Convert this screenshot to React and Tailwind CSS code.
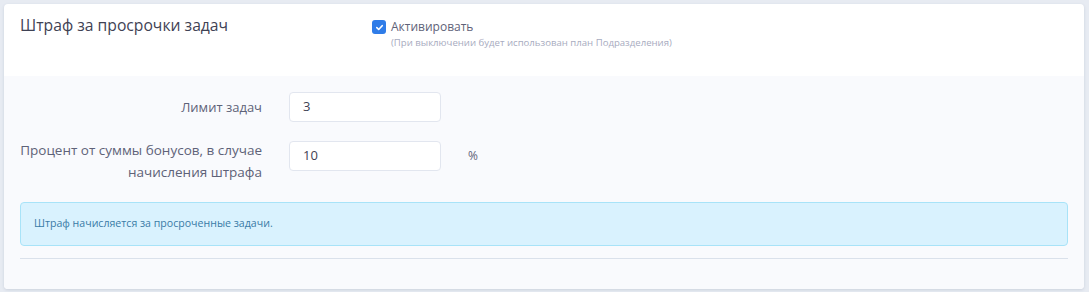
export default function App() {
  return (
    <div className="h-[292px] w-[1089px] bg-[#e7ebf2] p-1" style={{ fontFamily: '"Open Sans", "Noto Sans", sans-serif' }}>
      <div className="h-[285px] w-[1080px] overflow-hidden rounded-[4px] bg-white shadow-[0_1px_3px_rgba(80,95,130,0.18)]">
        <div className="flex h-[72px] px-4 pt-[10px]">
          <div className="w-[352px] text-[15.7px] leading-[22px] text-[#3f4254]">Штраф за просрочки задач</div>
          <div className="flex flex-col pt-[5px]">
            <div className="flex items-center">
              <span className="flex h-[14px] w-[14px] items-center justify-center rounded-[3px] bg-[#2f7ce8]">
                <svg width="9" height="9" viewBox="0 0 10 10" fill="none">
                  <path d="M2 5.2 L4.1 7.2 L8 3" stroke="white" strokeWidth="1.8" strokeLinecap="round" strokeLinejoin="round" />
                </svg>
              </span>
              <span className="ml-[5px] text-[12px] leading-[16px] text-[#5e6278]">Активировать</span>
            </div>
            <div className="ml-[19px] mt-[1px] text-[9.6px] leading-[14px] text-[#a7abc0]">(При выключении будет использован план Подразделения)</div>
          </div>
        </div>
        <div className="h-[213px] bg-[#f9fafd] px-4 pt-[16px]">
          <div className="flex items-center">
            <div className="w-[242px] text-right text-[13px] leading-[21px] text-[#5e6278]">Лимит задач</div>
            <div className="ml-[27px] flex h-[30px] w-[152px] items-center rounded-[4px] border border-[#e2e6ef] bg-white px-[13px] text-[13px] text-[#3f4254]">3</div>
          </div>
          <div className="mt-[19px] flex items-start">
            <div className="-mt-[2px] w-[242px] text-right text-[13.5px] leading-[22px] text-[#5e6278]">
              Процент от суммы бонусов, в случае
              <br />
              начисления штрафа
            </div>
            <div className="ml-[27px] flex h-[30px] w-[152px] items-center rounded-[4px] border border-[#e2e6ef] bg-white px-[13px] text-[13px] text-[#3f4254]">10</div>
            <div className="ml-[27px] mt-[6px] text-[12px] leading-[18px] text-[#5e6278]">%</div>
          </div>
          <div className="mt-[19px] flex h-[44px] items-center rounded-[4px] border border-[#a8e3f8] bg-[#d9f2fe] px-[13px] text-[10.6px] text-[#3a7ba6]">
            Штраф начисляется за просроченные задачи.
          </div>
          <div className="mt-[12px] h-px bg-[#dae1eb]" />
        </div>
      </div>
    </div>
  );
}
